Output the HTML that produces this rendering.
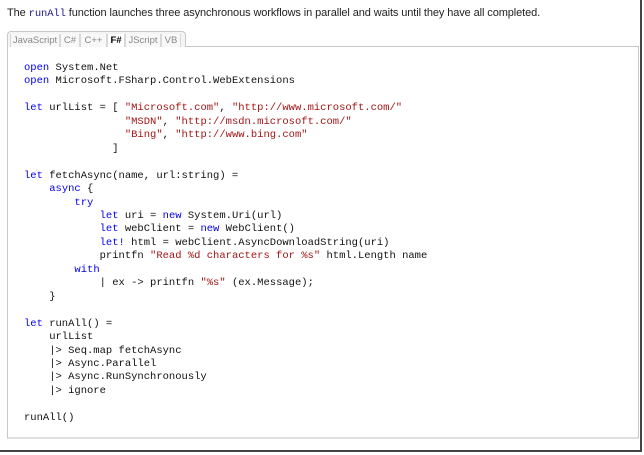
<!DOCTYPE html>
<html><head><style>
body{margin:0;width:644px;height:455px;background:#fff;position:relative;overflow:hidden;font-family:"Liberation Sans",sans-serif}
.t{position:absolute;left:7px;top:7px;font-size:11px;color:#222;white-space:nowrap;letter-spacing:-0.1px}
.t code{font-family:"Liberation Mono",monospace;color:#1a1a8a;font-size:10.5px}
.tabs{position:absolute;left:7px;top:31px;width:177px;height:15px;border:1px solid #c8c8c8;border-bottom:none;border-radius:4px 4px 0 0;background:#f4f4f4}
.tab{position:absolute;top:2px;height:13px;font-size:9.5px;color:#888;line-height:13px;text-align:center;border-right:1px solid #d8d8d8;border-left:1px solid #d8d8d8;background:#f8f8f8}
.tab.a{background:#fff;color:#000;font-weight:bold}
.box{position:absolute;left:7px;top:46px;width:632px;height:393px;border:1px solid #c8c8c8;border-bottom:2px solid #e0e0e0;box-sizing:border-box;background:#fff}
pre{position:absolute;left:24px;top:62px;margin:0;font-family:"Liberation Mono",monospace;font-size:10.5px;line-height:13.46px;color:#111}
.k{color:#0000ee}.s{color:#a31515}
.sr{position:absolute;right:2px;top:0;width:2px;height:452px;background:#444}
.sb{position:absolute;left:0;top:450px;width:642px;height:2px;background:#444}
</style></head><body>
<div class="t">The <code>runAll</code> function launches three asynchronous workflows in parallel and waits until they have all completed.</div>
<div class="box"></div>
<div class="tabs">
<div class="tab" style="left:2px;width:48px">JavaScript</div>
<div class="tab" style="left:52px;width:18px">C#</div>
<div class="tab" style="left:72px;width:25px">C++</div>
<div class="tab a" style="left:99px;width:16px">F#</div>
<div class="tab" style="left:117px;width:34px">JScript</div>
<div class="tab" style="left:153px;width:18px">VB</div>
</div>
<pre><span class="k">open</span> System.Net
<span class="k">open</span> Microsoft.FSharp.Control.WebExtensions

<span class="k">let</span> urlList = [ <span class="s">"Microsoft.com"</span>, <span class="s">"http://www.microsoft.com/"</span>
                <span class="s">"MSDN"</span>, <span class="s">"http://msdn.microsoft.com/"</span>
                <span class="s">"Bing"</span>, <span class="s">"http://www.bing.com"</span>
              ]

<span class="k">let</span> fetchAsync(name, url:string) =
    <span class="k">async</span> {
        <span class="k">try</span>
            <span class="k">let</span> uri = <span class="k">new</span> System.Uri(url)
            <span class="k">let</span> webClient = <span class="k">new</span> WebClient()
            <span class="k">let!</span> html = webClient.AsyncDownloadString(uri)
            printfn <span class="s">"Read %d characters for %s"</span> html.Length name
        <span class="k">with</span>
            | ex -&gt; printfn <span class="s">"%s"</span> (ex.Message);
    }

<span class="k">let</span> runAll() =
    urlList
    |&gt; Seq.map fetchAsync
    |&gt; Async.Parallel
    |&gt; Async.RunSynchronously
    |&gt; ignore

runAll()</pre>
<div class="sr"></div><div class="sb"></div>
</body></html>
